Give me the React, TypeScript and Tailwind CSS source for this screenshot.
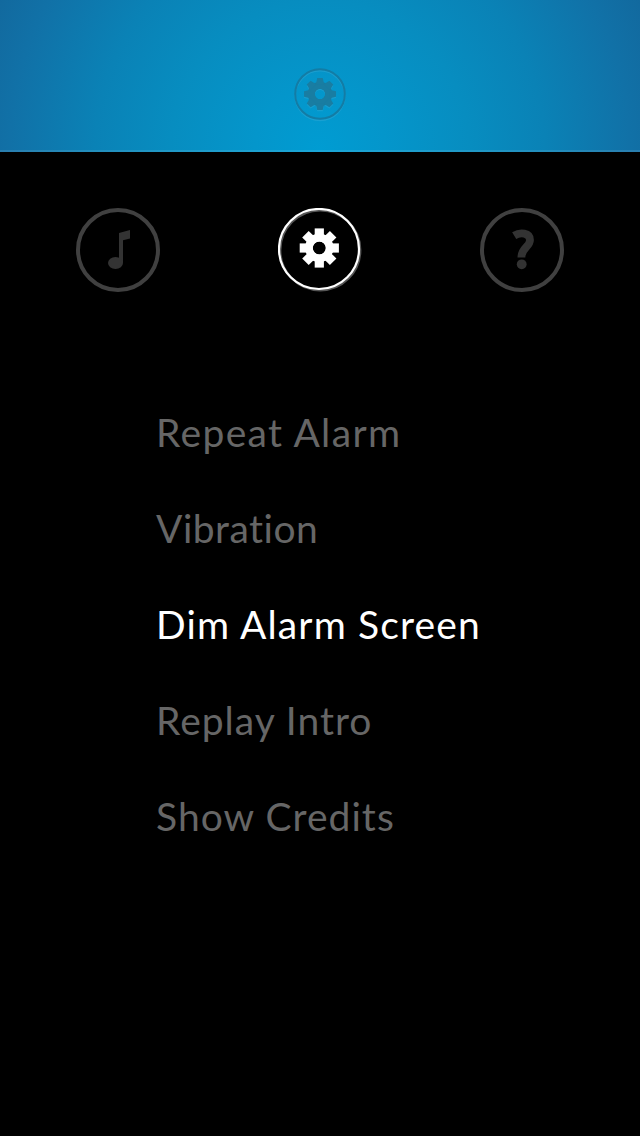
import React from "react";

const items = [
  { label: "Repeat Alarm", active: false, spacing: "tracking-[1.35px]" },
  { label: "Vibration", active: false, spacing: "tracking-[0.5px]" },
  { label: "Dim Alarm Screen", active: true, spacing: "tracking-[1.15px]" },
  { label: "Replay Intro", active: false, spacing: "tracking-[1px]" },
  { label: "Show Credits", active: false, spacing: "tracking-[1.05px]" },
];

const teeth = [0, 45, 90, 135, 180, 225, 270, 315];

// Gear centred on 0,0 with a 20 unit outer radius
const Gear: React.FC<{ tooth: string }> = ({ tooth }) => (
  <g>
    <circle r="10.2" fill="none" stroke="currentColor" strokeWidth="7.4" />
    {teeth.map((deg) => (
      <path key={deg} d={tooth} fill="currentColor" transform={`rotate(${deg})`} />
    ))}
  </g>
);

const HeaderGear = () => (
  <svg width="56" height="56" viewBox="-28 -28 56 56">
    <circle cy="1.6" r="24.8" fill="none" stroke="#35a9d4" strokeWidth="1.6" opacity="0.45" />
    <circle r="24.8" fill="none" stroke="#137ca5" strokeWidth="2" />
    <g className="text-[#35a9d4]" opacity="0.4" transform="translate(0 1.3) scale(0.8)">
      <Gear tooth="M-5.4-12 -3.4-20H3.4L5.4-12Z" />
    </g>
    <g className="text-[#197da2]" transform="scale(0.8)">
      <circle r="10.9" fill="none" stroke="currentColor" strokeWidth="8.8" />
      <Gear tooth="M-5.4-12 -3.4-20H3.4L5.4-12Z" />
    </g>
  </svg>
);

const MusicTab = () => (
  <svg width="84" height="84" viewBox="0 0 84 84">
    <circle cx="42" cy="42" r="40" fill="none" stroke="#404040" strokeWidth="4" />
    <path d="M43 25 54 22V30.5L47 32.3V55H43Z" fill="#333" />
    <ellipse cx="39.5" cy="55" rx="7.5" ry="6" fill="#333" />
  </svg>
);

const SettingsTab = () => (
  <svg width="84" height="84" viewBox="0 0 84 84">
    <circle cx="42.2" cy="42.2" r="40" fill="none" stroke="#555" strokeWidth="2.4" />
    <circle cx="41" cy="41" r="40" fill="none" stroke="#fff" strokeWidth="2.2" />
    <g className="text-white" transform="translate(41.3 40)">
      <circle r="10.4" fill="none" stroke="currentColor" strokeWidth="7.6" />
      <Gear tooth="M-4.6-12V-19.6H4.6V-12Z" />
    </g>
  </svg>
);

const HelpTab = () => (
  <svg width="84" height="84" viewBox="0 0 84 84">
    <circle cx="42" cy="42" r="40" fill="none" stroke="#404040" strokeWidth="4" />
    <path d="M34.2 27.6C40 24 50 24.6 50 32C50 39 41.5 39.5 41.4 49.5" fill="none" stroke="#333" strokeWidth="7.8" />
    <circle cx="41.7" cy="56.3" r="4.9" fill="#333" />
  </svg>
);

const App: React.FC = () => {
  return (
    <div className="w-[640px] h-[1136px] bg-black overflow-hidden font-['Lato',sans-serif]">
      <header className="h-[152px] pt-[66px] flex justify-center border-b-2 border-white/10 bg-[radial-gradient(circle_at_50%_150px,#009cd2_0px,#0496cb_65px,#078dc0_150px,#0a82b6_225px,#1171a7_310px,#12699e_355px)] bg-origin-border">
        <HeaderGear />
      </header>

      <nav className="mt-14 px-[76px] flex justify-between">
        <button aria-label="Sounds"><MusicTab /></button>
        <button aria-label="Settings"><SettingsTab /></button>
        <button aria-label="Help"><HelpTab /></button>
      </nav>

      <ul className="mt-[92px] pl-[156px]">
        {items.map((item) => (
          <li
            key={item.label}
            className={`h-24 text-[39px] leading-[96px] whitespace-nowrap ${item.spacing} ${item.active ? "text-white" : "text-[#666]"}`}
          >
            {item.label}
          </li>
        ))}
      </ul>
    </div>
  );
};

export default App;
